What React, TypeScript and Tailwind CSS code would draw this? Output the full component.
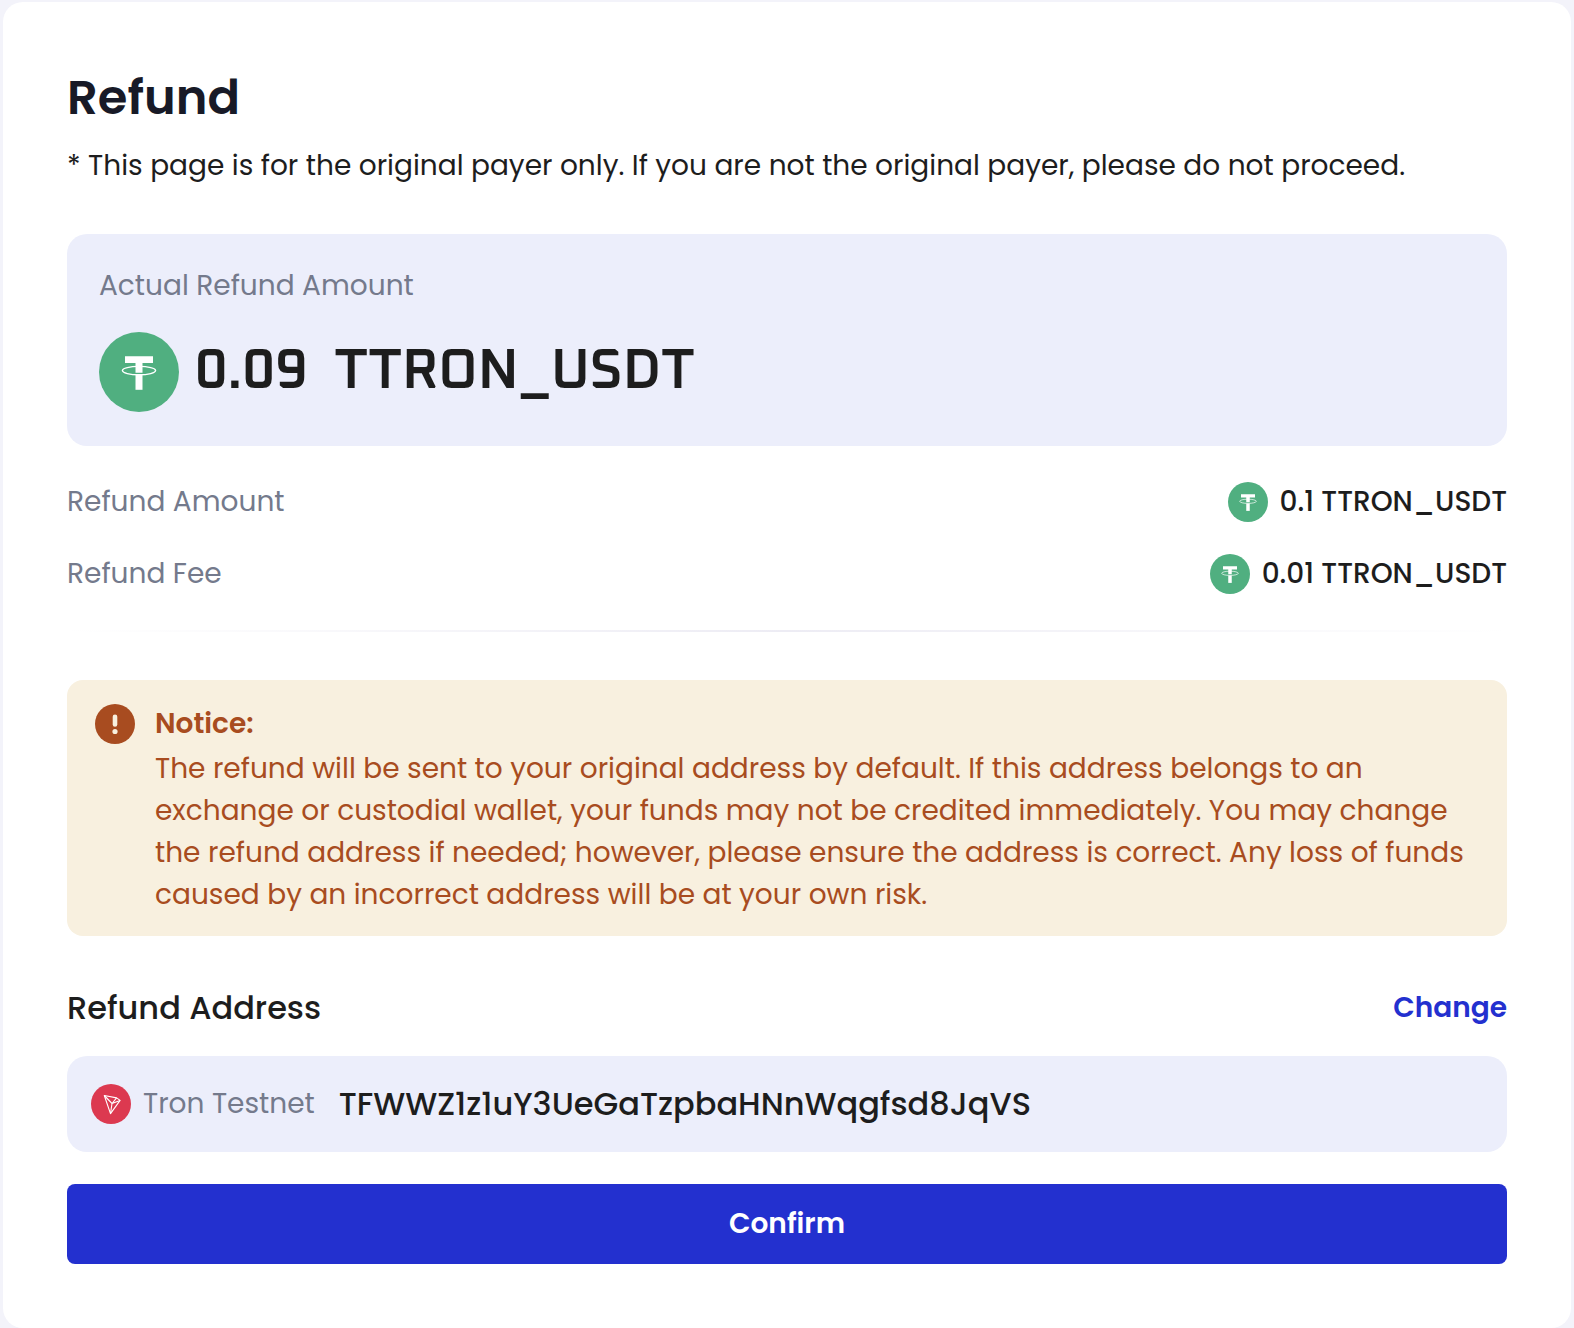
import React from 'react';

const TetherIcon: React.FC<{ className: string }> = ({ className }) => (
  <svg viewBox="0 0 80 80" className={className} aria-hidden="true">
    <circle cx="40" cy="40" r="40" fill="#50af80" />
    <path fill="#fff" d="M26 24.3h28v6.8h-10.5v9.6h-7v-9.6H26z" />
    <path fill="#fff" d="M36.5 43h7v14.8h-7z" />
    <ellipse cx="40" cy="38.6" rx="16.6" ry="4.2" fill="none" stroke="#fff" strokeWidth="1.4" />
  </svg>
);

const TronIcon: React.FC<{ className: string }> = ({ className }) => (
  <svg viewBox="0 0 40 40" className={className} aria-hidden="true">
    <circle cx="20" cy="20" r="20" fill="#dc3950" />
    <g fill="none" stroke="#fff" strokeWidth="1.1" strokeLinejoin="round">
      <path d="M13.3 11.5l12.3 2.4 3.5 2.5-9.6 13.2z" />
      <path d="M13.3 11.5l7.7 8-1.5 10.1M21 19.5l8.1-3.1M21 19.5l4.6-5.6" />
    </g>
  </svg>
);

const NoticeIcon: React.FC<{ className: string }> = ({ className }) => (
  <svg viewBox="0 0 40 40" className={className} aria-hidden="true">
    <circle cx="20" cy="20" r="20" fill="#a84c20" />
    <path d="M20 12.8v7.6" stroke="#f8f0df" strokeWidth="4.6" strokeLinecap="round" />
    <circle cx="20" cy="27.5" r="2.6" fill="#f8f0df" />
  </svg>
);

const rows = [
  { label: 'Refund Amount', value: '0.1 TTRON_USDT' },
  { label: 'Refund Fee', value: '0.01 TTRON_USDT' },
];

const App: React.FC = () => {
  return (
    <div className="min-h-screen bg-[#f3f3fa] px-[3px] pt-[2px] font-['Poppins','Inter',sans-serif] text-[28px] leading-[42px] text-[#1d1d1d]">
      <main className="rounded-[20px] bg-white p-16">
        <h1 className="text-5xl leading-[64px] font-semibold text-[#181a27]">Refund</h1>
        <p className="mt-[15px]">
          * This page is for the original payer only. If you are not the original payer, please do not proceed.
        </p>

        <section className="mt-[47px] rounded-[20px] bg-[#eceefb] px-8 pt-[31px] pb-8">
          <h2 className="text-[#747a8c]">Actual Refund Amount</h2>
          <div className="mt-[23px] flex h-[84px] items-center gap-4 font-['Oxanium',Roboto,sans-serif] text-[56px] font-semibold">
            <TetherIcon className="size-20 shrink-0" />
            <div className="flex gap-[27px]">
              <span>0.09</span>
              <span>TTRON_USDT</span>
            </div>
          </div>
        </section>

        <dl className="mt-[35px] flex flex-col gap-[30px]">
          {rows.map((row) => (
            <div key={row.label} className="flex items-center justify-between">
              <dt className="text-[#747a8c]">{row.label}</dt>
              <dd className="flex items-center gap-3 font-medium">
                <TetherIcon className="size-10" />
                {row.value}
              </dd>
            </div>
          ))}
        </dl>

        <div className="mt-[35px] h-[2px] bg-linear-to-r from-transparent via-[#edecf4] to-transparent" />

        <section className="mt-12 flex gap-5 rounded-2xl bg-[#f8f0df] pt-6 pr-6 pb-5 pl-7 text-[#a84c20]">
          <NoticeIcon className="size-10 shrink-0" />
          <div>
            <h2 className="leading-10 font-semibold">Notice:</h2>
            <p className="mt-1">
              The refund will be sent to your original address by default. If this address belongs to an exchange or
              custodial wallet, your funds may not be credited immediately. You may change the refund address if
              needed; however, please ensure the address is correct. Any loss of funds caused by an incorrect address
              will be at your own risk.
            </p>
          </div>
        </section>

        <div className="mt-12 flex items-center justify-between">
          <h2 className="text-[32px] leading-[48px] font-medium">Refund Address</h2>
          <button type="button" className="font-semibold text-[#2330cf]">
            Change
          </button>
        </div>

        <div className="mt-6 flex h-24 items-center rounded-[20px] bg-[#eceefb] px-6">
          <TronIcon className="size-10 shrink-0" />
          <span className="ml-3 text-[#747a8c]">Tron Testnet</span>
          <span className="ml-6 text-[32px] font-medium">TFWWZ1z1uY3UeGaTzpbaHNnWqgfsd8JqVS</span>
        </div>

        <button type="button" className="mt-8 h-20 w-full rounded-lg bg-[#2330cf] font-semibold text-white">
          Confirm
        </button>
      </main>
    </div>
  );
};

export default App;
